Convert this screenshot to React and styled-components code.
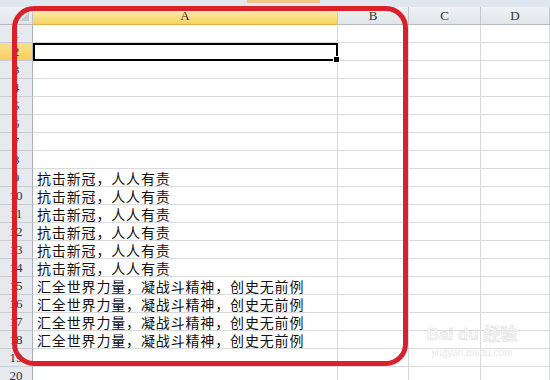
import React from "react";
import styled, { createGlobalStyle, css } from "styled-components";

const Global = createGlobalStyle`
  html, body { margin: 0; padding: 0; background: #fff; }
  body { width: 550px; height: 380px; overflow: hidden; }
`;

const COLS = "33px 305px 71px 72px 1fr";

const Sheet = styled.div`
  position: relative;
  width: 550px;
  height: 380px;
  overflow: hidden;
  display: flex;
  flex-direction: column;
  background: #fff;
  font-family: "Liberation Serif", "Noto Sans CJK SC", serif;
`;

const TopStrip = styled.div`
  height: 7px;
  flex: none;
  background: #dfe7f1;
  display: grid;
  grid-template-columns: 247px 73px 1fr;
`;

const Tab = styled.div`
  grid-column: 2;
  height: 3px;
  background: #f3c486;
`;

const HeaderRow = styled.div`
  height: 18px;
  flex: none;
  display: grid;
  grid-template-columns: ${COLS};
`;

const ColHead = styled.div`
  box-sizing: border-box;
  border-right: 1px solid #c2c8d0;
  border-bottom: 1px solid #b4bac3;
  display: flex;
  align-items: center;
  justify-content: center;
  font-size: 13px;
  color: #2b3340;
  background: ${(p) =>
    p.$selected
      ? "linear-gradient(#fef5c8, #fbe08a 55%, #f7d25c)"
      : "linear-gradient(#eef1f5, #e1e5ea)"};
  ${(p) =>
    p.$selected &&
    css`
      border-bottom-color: #e2b349;
    `}
`;

const Corner = styled(ColHead)`
  position: relative;
  &::after {
    content: "";
    position: absolute;
    right: 3px;
    bottom: 3px;
    width: 0;
    height: 0;
    border-left: 9px solid transparent;
    border-bottom: 9px solid #c3c9d1;
  }
`;

const Row = styled.div`
  height: 18px;
  flex: none;
  display: grid;
  grid-template-columns: ${COLS};
`;

const RowHead = styled.div`
  box-sizing: border-box;
  border-right: 1px solid #a9b0ba;
  border-bottom: 1px solid #c9ced6;
  display: flex;
  align-items: center;
  justify-content: center;
  font-size: 13px;
  line-height: 16px;
  color: #2b3340;
  background: ${(p) =>
    p.$selected ? "linear-gradient(#fcdf8c, #f7cf5c)" : "#e6e9ee"};
`;

const Cell = styled.div`
  position: relative;
  box-sizing: border-box;
  border-right: 1px solid #d8dadd;
  border-bottom: 1px solid #d8dadd;
  padding-left: 4px;
  display: flex;
  align-items: center;
  white-space: nowrap;
  font-family: "Noto Sans CJK SC", sans-serif;
  font-size: 14px;
  letter-spacing: 0.85px;
  color: #111;
  line-height: 14px;
  overflow: hidden;
  ${(p) =>
    p.$active &&
    css`
      overflow: visible;
      outline: 2px solid #000;
      outline-offset: -2px;
    `}
`;

const FillHandle = styled.span`
  position: absolute;
  right: -3px;
  bottom: -3px;
  width: 5px;
  height: 5px;
  background: #000;
  border: 1px solid #fff;
  z-index: 2;
`;

const RedFrame = styled.div`
  position: absolute;
  left: 12px;
  top: 6px;
  width: 396px;
  height: 360px;
  box-sizing: border-box;
  border: 5px solid #d9212c;
  border-radius: 22px;
  pointer-events: none;
  z-index: 5;
`;

const Watermark = styled.div`
  position: absolute;
  left: 422px;
  top: 326px;
  width: 100px;
  display: flex;
  flex-direction: column;
  align-items: center;
  font-family: "Liberation Sans", "Noto Sans CJK SC", sans-serif;
  pointer-events: none;
  z-index: 4;
`;

const WmTop = styled.div`
  font-size: 17px;
  font-weight: bold;
  -webkit-text-stroke: 0.6px #e2e2e2;
  color: #f7f7f7;
  line-height: 1;
  white-space: nowrap;
`;

const WmBottom = styled.div`
  font-size: 10px;
  margin-top: 4px;
  color: #e8e8e8;
  white-space: nowrap;
`;

const TEXT_A = "抗击新冠，人人有责";
const TEXT_B = "汇全世界力量，凝战斗精神，创史无前例";

const rows = Array.from({ length: 20 }, (_, i) => {
  const n = i + 1;
  let text = "";
  if (n >= 9 && n <= 14) text = TEXT_A;
  if (n >= 15 && n <= 18) text = TEXT_B;
  return { n, text };
});

export default function App() {
  return (
    <>
      <Global />
      <Sheet>
        <TopStrip>
          <Tab />
        </TopStrip>
        <HeaderRow>
          <Corner />
          <ColHead $selected>A</ColHead>
          <ColHead>B</ColHead>
          <ColHead>C</ColHead>
          <ColHead>D</ColHead>
        </HeaderRow>
        {rows.map((r) => (
          <Row key={r.n}>
            <RowHead $selected={r.n === 2}>{r.n}</RowHead>
            <Cell $active={r.n === 2}>
              {r.text}
              {r.n === 2 && <FillHandle />}
            </Cell>
            <Cell />
            <Cell />
            <Cell />
          </Row>
        ))}
        <RedFrame />
        <Watermark>
          <WmTop>Bai du 经验</WmTop>
          <WmBottom>jingyan.baidu.com</WmBottom>
        </Watermark>
      </Sheet>
    </>
  );
}
